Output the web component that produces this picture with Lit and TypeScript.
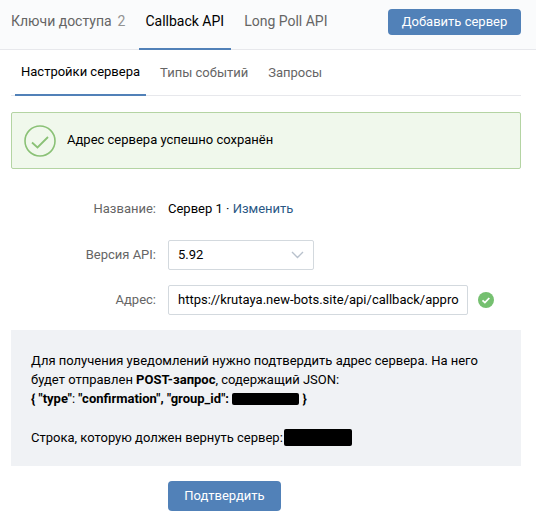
import { LitElement, html, css } from "lit";
import { customElement } from "lit/decorators.js";

@customElement("app-root")
export class AppRoot extends LitElement {
  static styles = css`
    :host { display: block; width: 536px; height: 527px; background: #fff; overflow: hidden;
      font-family: Roboto, "Liberation Sans", sans-serif; font-size: 13px; color: #000; line-height: 18px; }
    .top { height: 49px; background: #fafbfc; border-bottom: 1px solid #e7e8ec; display: flex; padding: 0 15px 0 11px; align-items: stretch; }
    .tab { font-size: 14px; color: #656565; display: flex; align-items: center; padding-bottom: 7px; border-bottom: 2px solid transparent; box-sizing: border-box; height: 50px; }
    .tab.k { margin-right: 14px; }
    .tab .n { color: #939393; margin-left: 6px; }
    .tab.on { color: #000; border-bottom-color: #5181b8; padding: 0 7px 7px 6px; margin-right: 13px; }
    .spacer { flex: 1; }
    .btn { background: #5181b8; color: #fff; border-radius: 4px; font-size: 13px; display: flex; align-items: center; justify-content: center; height: 26px; padding-bottom: 1px; box-sizing: border-box; }
    .add { width: 133px; margin-top: 9px; }
    .sub { margin: 0 15px 0 11px; height: 46px; border-bottom: 1px solid #e7e8ec; display: flex; padding-left: 4px; box-sizing: border-box; }
    .st { font-size: 13px; color: #656565; margin-right: 20px; display: flex; align-items: center; height: 46px; box-sizing: border-box; padding-bottom: 1px; }
    .st.on { color: #000; border-bottom: 2px solid #5181b8; padding: 0 6px 0; margin-right: 14px; }
    .alert { margin: 16px 15px 0 11px; height: 57px; box-sizing: border-box; background: #f0f8ec; border: 1px solid #b4d4a3; border-radius: 2px; display: flex; align-items: center; padding-left: 12px; gap: 11px; }
    .alert span { margin-top: -1px; }
    .row { display: flex; align-items: center; }
    .label { width: 156px; margin-right: 12px; text-align: right; color: #656565; }
    .r1 { margin-top: 31px; height: 18px; }
    .r2 { margin-top: 22px; }
    .r3 { margin-top: 15px; }
    .field { box-sizing: border-box; height: 30px; border: 1px solid #d3d9de; border-radius: 2px; display: flex; align-items: center; padding: 0 9px; background: #fff; }
    .select { width: 146px; justify-content: space-between; }
    .input { width: 300px; white-space: nowrap; overflow: hidden; }
    .ok { margin-left: 10px; display: block; }
    a { color: #2a5885; }
    .info { margin: 15px 15px 0 11px; background: #f0f2f5; height: 136px; box-sizing: border-box; padding: 21px 20px; line-height: 19px; }
    .p2 { margin-top: 20px; }
    b { font-weight: 700; }
    .black { display: inline-block; background: #000; border-radius: 2px; }
    .b1 { width: 67px; height: 12px; vertical-align: -2px; }
    .b2 { width: 68px; height: 17px; vertical-align: -4px; margin-left: 1px; }
    .confirm { width: 113px; height: 30px; margin: 15px 0 0 168px; }
  `;
  render() {
    return html`
      <div class="top">
        <div class="tab k">Ключи доступа<span class="n">2</span></div>
        <div class="tab on">Callback API</div>
        <div class="tab">Long Poll API</div>
        <div class="spacer"></div>
        <div class="btn add">Добавить сервер</div>
      </div>
      <div class="sub">
        <div class="st on">Настройки сервера</div>
        <div class="st">Типы событий</div>
        <div class="st">Запросы</div>
      </div>
      <div class="alert">
        <svg width="32" height="32" viewBox="0 0 32 32" fill="none" stroke="#8ac176" stroke-width="1.6">
          <circle cx="16" cy="16" r="15"/>
          <path d="M8 17.5l5.5 5L24 12" stroke-width="1.8"/>
        </svg>
        <span>Адрес сервера успешно сохранён</span>
      </div>
      <div class="row r1"><div class="label">Название:</div><div>Сервер 1 · <a>Изменить</a></div></div>
      <div class="row r2"><div class="label">Версия API:</div>
        <div class="field select">5.92
          <svg width="13" height="8" viewBox="0 0 13 8" fill="none" stroke="#b8c1cc" stroke-width="1.4"><path d="M1 1l5.5 5.5L12 1"/></svg>
        </div>
      </div>
      <div class="row r3"><div class="label">Адрес:</div>
        <div class="field input">https://krutaya.new-bots.site/api/callback/appro</div>
        <svg class="ok" width="16" height="16" viewBox="0 0 16 16"><circle cx="8" cy="8" r="8" fill="#75c070"/><path d="M4.5 8.3l2.4 2.3 4.4-4.6" fill="none" stroke="#fff" stroke-width="1.8"/></svg>
      </div>
      <div class="info">
        <div>
          Для получения уведомлений нужно подтвердить адрес сервера. На него<br>
          будет отправлен <b>POST-запрос</b>, содержащий JSON:<br>
          <b>{ "type"</b>: <b>"confirmation", "group_id":</b> <span class="black b1"></span> <b>}</b>
        </div>
        <div class="p2">Строка, которую должен вернуть сервер:<span class="black b2"></span></div>
      </div>
      <div class="btn confirm">Подтвердить</div>
    `;
  }
}
